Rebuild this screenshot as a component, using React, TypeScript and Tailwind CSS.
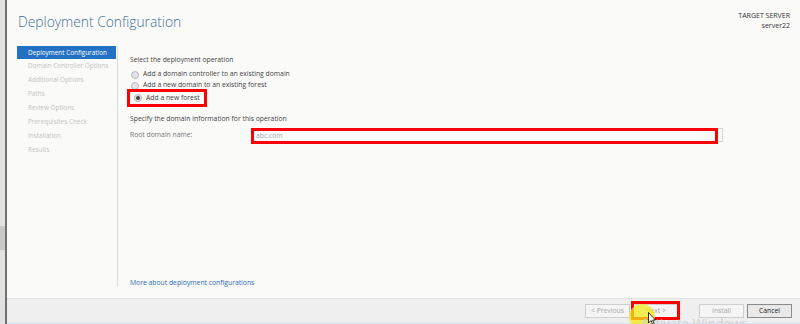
const steps = [
  'Domain Controller Options',
  'Additional Options',
  'Paths',
  'Review Options',
  'Prerequisites Check',
  'Installation',
  'Results',
];

function Radio({ checked }: { checked?: boolean }) {
  return (
    <span className="w-[8px] h-[8px] rounded-full border border-[#b9b9b9] bg-[#e4e4e4] flex items-center justify-center shrink-0">
      {checked && <span className="w-[4px] h-[4px] rounded-full bg-[#3c3c3c]" />}
    </span>
  );
}

function Btn({ label, dark }: { label: string; dark?: boolean }) {
  return (
    <div
      className={`w-[45px] h-[14px] flex items-center justify-center text-[6.8px] border ${
        dark ? 'border-[#8a8a8a] bg-[#e9e9e9] text-[#222]' : 'border-[#cfcfcf] bg-[#f5f5f5] text-[#a8a8a8]'
      }`}
    >
      {label}
    </div>
  );
}

export default function App() {
  return (
    <div
      className="w-[800px] h-[324px] flex bg-[#e2e2e2] overflow-hidden relative"
      style={{ fontFamily: '"Open Sans", "Noto Sans", sans-serif' }}
    >
      <div className="w-[5px] flex flex-col">
        <div className="h-[226px]" />
        <div className="h-[24px] bg-[#c8c8c8]" />
      </div>
      <div className="w-[2px] bg-[#707070]" />
      <div className="flex-1 flex flex-col bg-[#fafaf9]">
        <div className="h-[46px] flex justify-between pl-[11px] pr-[10px]">
          <div className="pt-[12px] text-[13.8px] font-light text-[#42709a]">Deployment Configuration</div>
          <div className="pt-[11px] text-[7px] leading-[10px] text-[#333] text-right">
            <div>TARGET SERVER</div>
            <div>server22</div>
          </div>
        </div>
        <div className="flex-1 flex">
          <div className="w-[101px] ml-[10px] pr-[1px] text-[6.4px] leading-[14px] text-[#c4c4c4] border-r border-[#dcdcdc] h-[241px]">
            <div className="bg-[#2371c4] text-white pl-[11px] h-[13px] leading-[13px] whitespace-nowrap">Deployment Configuration</div>
            {steps.map((s) => (
              <div key={s} className="pl-[11px] whitespace-nowrap">
                {s}
              </div>
            ))}
          </div>
          <div className="flex-1 pl-[12px] pr-[10px] text-[6.8px] text-[#444] flex flex-col">
            <div className="mt-[9px] h-[10px] leading-[10px]">Select the deployment operation</div>
            <div className="mt-[4px] flex flex-col">
              <div className="flex items-center gap-[4px] h-[11px] pl-[1px]">
                <Radio />
                <span>Add a domain controller to an existing domain</span>
              </div>
              <div className="flex items-center gap-[4px] h-[11px] pl-[1px]">
                <Radio />
                <span>Add a new domain to an existing forest</span>
              </div>
              <div className="-mt-[2px] flex items-center gap-[4px] h-[18px] w-[80px] -ml-[3px] pl-[4px] border-[3px] border-[#ff0000] whitespace-nowrap">
                <Radio checked />
                <span>Add a new forest</span>
              </div>
            </div>
            <div className="mt-[7px] h-[10px] leading-[10px]">Specify the domain information for this operation</div>
            <div className="mt-[4px] flex items-center">
              <div className="w-[121px] text-[#777]">Root domain name:</div>
              <div className="relative w-[472px] h-[14px] border border-[#d6d6d6] bg-[#fafafa]">
                <div className="absolute -left-[1px] -top-[1px] w-[467px] h-[16px] border-[3px] border-[#ff0000]" />
                <span className="absolute left-[4px] top-[2px] text-[#aaa]">abc.com</span>
              </div>
            </div>
            <div className="flex-1" />
            <div className="text-[#2d6db5] mb-[10px]">More about deployment configurations</div>
          </div>
        </div>
        <div className="h-[25px] bg-[#efefef] border-t border-[#dedede] flex items-center justify-end pr-[8px] gap-[3px] relative">
          <Btn label="< Previous" />
          <div className="relative">
            <Btn label="Next >" />
            <div className="absolute -left-[2px] -top-[3px] w-[49px] h-[19px] border-[3px] border-[#ff0000]" />
          </div>
          <div className="w-[15px]" />
          <Btn label="Install" />
          <Btn label="Cancel" dark />
          <div className="absolute left-[622px] top-[5px] w-[26px] h-[26px] rounded-full bg-[#f2ea1c]/75 pointer-events-none" />
          <div className="absolute left-[634px] top-[15px] text-[13px] text-[#cfcfcf] whitespace-nowrap pointer-events-none">Activate Windows</div>
          <svg className="absolute left-[641px] top-[13px]" width="8" height="13" viewBox="0 0 8 13">
            <path d="M0.5 0.5 L0.5 11 L3 8.5 L5 13 L6.5 12.3 L4.6 8 L7.5 8 Z" fill="#fff" stroke="#000" strokeWidth="0.8" />
          </svg>
        </div>
        <div className="h-[1px] bg-[#cfe3f3]" />
      </div>
    </div>
  );
}
